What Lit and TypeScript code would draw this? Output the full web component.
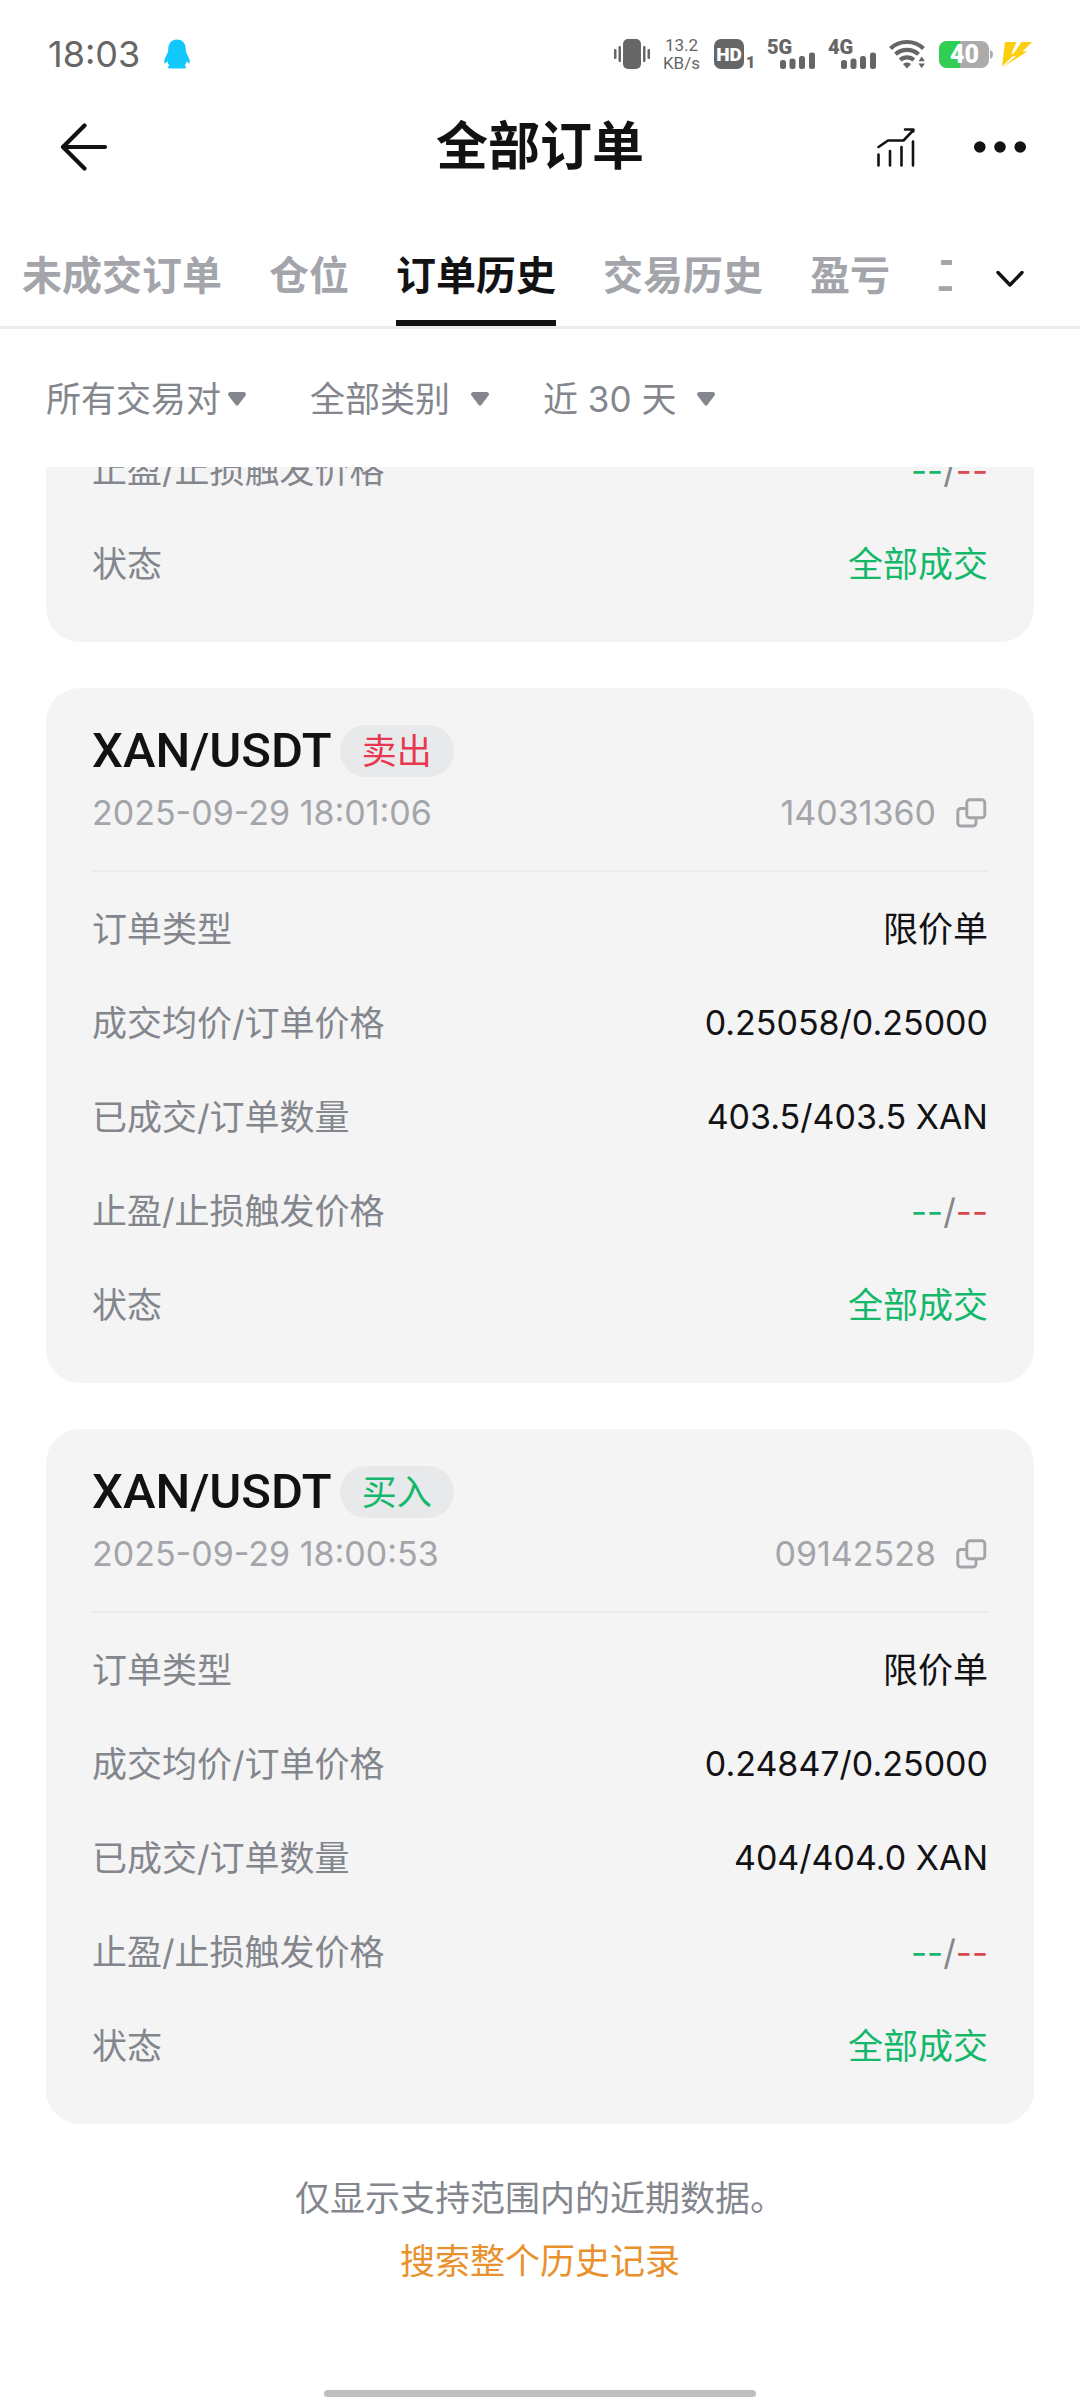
import { LitElement, html, css, nothing } from "lit";
import { customElement, property, state } from "lit/decorators.js";
import { classMap } from "lit/directives/class-map.js";

type Tone = "plain" | "num" | "good" | "stops";

interface Row {
  label: string;
  value: string;
  tone: Tone;
}

interface Order {
  pair: string;
  side: string;
  buy: boolean;
  time: string;
  id: string;
  rows: Row[];
}

const STOPS: Row = { label: "止盈/止损触发价格", value: "", tone: "stops" };
const DONE: Row = { label: "状态", value: "全部成交", tone: "good" };

const ORDERS: Order[] = [
  {
    pair: "XAN/USDT",
    side: "卖出",
    buy: false,
    time: "2025-09-29 18:01:06",
    id: "14031360",
    rows: [
      { label: "订单类型", value: "限价单", tone: "plain" },
      { label: "成交均价/订单价格", value: "0.25058/0.25000", tone: "num" },
      { label: "已成交/订单数量", value: "403.5/403.5 XAN", tone: "num" },
      STOPS,
      DONE,
    ],
  },
  {
    pair: "XAN/USDT",
    side: "买入",
    buy: true,
    time: "2025-09-29 18:00:53",
    id: "09142528",
    rows: [
      { label: "订单类型", value: "限价单", tone: "plain" },
      { label: "成交均价/订单价格", value: "0.24847/0.25000", tone: "num" },
      { label: "已成交/订单数量", value: "404/404.0 XAN", tone: "num" },
      STOPS,
      DONE,
    ],
  },
];

const TABS = ["未成交订单", "仓位", "订单历史", "交易历史", "盈亏", "工具"];

@customElement("status-bar")
class StatusBar extends LitElement {
  static styles = css`
    :host {
      display: flex;
      align-items: center;
      height: 92px;
      padding: 16px 48px 0;
      box-sizing: border-box;
      color: #666;
      font-family: Roboto, "Liberation Sans", sans-serif;
    }
    svg {
      display: block;
      flex: none;
      overflow: visible;
    }
    .time {
      font-family: Inter, sans-serif;
      font-size: 36px;
      line-height: 44px;
    }
    .qq {
      margin-left: 24px;
    }
    .right {
      display: flex;
      align-items: center;
      gap: 13px;
      margin-left: auto;
    }
    .speed {
      font-size: 17px;
      line-height: 18px;
      text-align: center;
    }
    .power {
      display: flex;
      align-items: center;
      gap: 9px;
    }
    .glyph {
      font-family: Roboto, sans-serif;
      font-weight: 900;
    }
  `;

  private signal(name: string) {
    return html`<svg width="48" height="30" viewBox="0 0 48 30" fill="#666" role="img" aria-label=${name}>
      <text class="glyph" x="0" y="15" font-size="20">${name}</text>
      <rect x="13" y="21" width="6" height="9" rx="2.5" />
      <rect x="22.5" y="19.5" width="6" height="10.5" rx="2.5" />
      <rect x="32" y="17" width="6" height="13" rx="2.5" />
      <rect x="42" y="13.5" width="6" height="16.5" rx="2.5" />
    </svg>`;
  }

  render() {
    return html`
      <span class="time">18:03</span>
      <svg class="qq" width="26" height="30" viewBox="0 0 26 30" fill="#12c8fa">
        <path d="M13 .5C7.500 .5 4.300 4.500 4.300 9.500c0 3-.6 4.500-2 7C.8 19.200 0 21.800.2 23.600c.1 1.100.8 1 1.500.4l1.700-1.700c.3 1.700 1 3.200 2 4.400-1 .4-1.600 1-1.600 1.700 0 .8 1 1.100 3.500 1.100h11.400c2.500 0 3.500-.3 3.500-1.100 0-.7-.6-1.300-1.600-1.700 1-1.200 1.700-2.700 2-4.400l1.700 1.700c.7.6 1.400.7 1.500-.4.200-1.800-.6-4.400-2.100-7.100-1.400-2.500-2-4-2-7C21.700 4.500 18.500.5 13 .5z" />
      </svg>
      <div class="right">
        <svg width="36" height="30" viewBox="0 0 36 30" fill="#666">
          <rect x="9" y="0" width="18" height="30" rx="5" />
          <rect x="4.500" y="7" width="2.500" height="16" rx="1" />
          <rect x="0" y="10" width="2.500" height="10" rx="1" />
          <rect x="29" y="7" width="2.500" height="16" rx="1" />
          <rect x="33.500" y="10" width="2.500" height="10" rx="1" />
        </svg>
        <div class="speed">13.2<br />KB/s</div>
        <svg width="41" height="30" viewBox="0 0 41 30" fill="#666">
          <rect x="1" y="0" width="30" height="30" rx="7" />
          <text class="glyph" x="16" y="22" font-size="19" fill="#fff" text-anchor="middle">HD</text>
          <text class="glyph" x="33" y="29" font-size="16">1</text>
        </svg>
        ${this.signal("5G")} ${this.signal("4G")}
        <svg width="37" height="30" viewBox="0 0 37 30" fill="none" stroke="#666">
          <path d="M1.500 9.500C10.500.8 25.500.8 34.500 9.500" stroke-width="4.200" />
          <path d="M6.500 15.300C12.800 9.400 23.200 9.400 29.500 15.300" stroke-width="4.200" />
          <path d="M11.200 21C15 17.400 21 17.400 24.800 21" stroke-width="4.200" />
          <path d="M14 25q4-2.800 8 0l-4 4.500z" fill="#666" stroke="none" />
          <path d="M29.500 22.200l3.200-4.700 3.200 4.700zM29.500 24.600h6.400l-3.200 4.700z" fill="#666" stroke="none" />
        </svg>
        <div class="power">
          <svg width="54" height="27" viewBox="0 0 54 27" role="img" aria-label="40">
            <clipPath id="body"><rect width="50" height="27" rx="8" /></clipPath>
            <g clip-path="url(#body)">
              <rect width="50" height="27" fill="#ababab" />
              <rect width="21" height="27" fill="#32ce54" />
            </g>
            <path d="M51 9q3 1 3 4.500t-3 4.500z" fill="#ababab" />
            <text class="glyph" x="25.500" y="22" font-size="25" fill="#fff" text-anchor="middle">40</text>
          </svg>
          <svg width="30" height="25" viewBox="0 0 30 25" fill="#fbcf0f">
            <path d="M3 0h11.500L9.500 11.500h4L0 24.500z" />
            <path d="M19.500 0H30L20.500 9.500h4.800L1 25l13-10.800H9.800z" />
          </svg>
        </div>
      </div>
    `;
  }
}

@customElement("order-rows")
class OrderRows extends LitElement {
  @property({ attribute: false }) rows: Row[] = [];

  static styles = css`
    :host {
      display: block;
      font-size: 35px;
      line-height: 42px;
    }
    .rows {
      margin: 0;
    }
    .row {
      display: flex;
      align-items: center;
      justify-content: space-between;
      height: 94px;
    }
    .label {
      color: #83868c;
    }
    .value {
      margin: 0;
      color: #121214;
    }
    .num {
      font-size: 34px;
    }
    .good,
    .up {
      color: #14b86b;
    }
    .down {
      color: #d9474f;
    }
    .stops {
      color: #83868c;
    }
  `;

  render() {
    return html`<dl class="rows">
      ${this.rows.map(
        (row) => html`<div class="row">
          <dt class="label">${row.label}</dt>
          <dd class=${classMap({ value: true, [row.tone]: true })}>${row.tone === "stops"
            ? html`<span class="up">--</span>/<span class="down">--</span>`
            : row.value}</dd>
        </div>`
      )}
    </dl>`;
  }
}

@customElement("order-card")
class OrderCard extends LitElement {
  @property({ attribute: false }) order?: Order;
  @property({ attribute: false }) rows: Row[] = [];

  static styles = css`
    :host {
      display: block;
      padding: 0 46px 31px;
      border-radius: 34px;
      background: #f4f4f4;
    }
    .head {
      display: flex;
      flex-direction: column;
      gap: 16px;
      margin-bottom: 10px;
      padding: 37px 0;
      border-bottom: 2px solid #ebebec;
    }
    .line {
      display: flex;
      align-items: center;
    }
    .pair {
      margin: 0;
      color: #121214;
      font-family: Roboto, sans-serif;
      font-size: 49px;
      font-weight: 500;
      line-height: 52px;
    }
    .side {
      margin-left: 8px;
      padding: 0 22px;
      border-radius: 26px;
      background: #e8e9eb;
      font-size: 35px;
      line-height: 52px;
    }
    .buy {
      color: #14b86b;
    }
    .sell {
      color: #e8384f;
    }
    .meta {
      justify-content: space-between;
      color: #a3a5aa;
      font-size: 34px;
      line-height: 40px;
    }
    .id {
      display: flex;
      align-items: center;
      gap: 20px;
    }
    .copy {
      display: flex;
      padding: 0;
      border: 0;
      background: none;
      color: inherit;
    }
  `;

  render() {
    const o = this.order;
    return html`
      ${o
        ? html`<header class="head">
            <div class="line">
              <h2 class="pair">${o.pair}</h2>
              <span class=${classMap({ side: true, buy: o.buy, sell: !o.buy })}>${o.side}</span>
            </div>
            <div class="line meta">
              <time>${o.time}</time>
              <span class="id">
                ${o.id}
                <button class="copy" aria-label="复制">
                  <svg width="32" height="30" viewBox="0 0 32 30" fill="none" stroke="currentColor" stroke-width="2.900">
                    <rect x="10.800" y="1.800" width="18" height="18" rx="3" />
                    <path d="M10.800 10.500H4.800a3 3 0 0 0-3 3V25a3 3 0 0 0 3 3H17a3 3 0 0 0 3-3v-5.200" />
                  </svg>
                </button>
              </span>
            </div>
          </header>`
        : nothing}
      <order-rows .rows=${o ? o.rows : this.rows}></order-rows>
    `;
  }
}

@customElement("app-root")
class AppRoot extends LitElement {
  @state() private active = 2;

  static styles = css`
    :host {
      display: flex;
      flex-direction: column;
      min-height: 100vh;
      background: #fff;
      color: #121214;
      font-family: Inter, "Noto Sans CJK SC", sans-serif;
    }
    button,
    select {
      margin: 0;
      border: 0;
      background: none;
      color: inherit;
      font: inherit;
    }
    svg {
      display: block;
      flex: none;
    }
    .bar {
      display: grid;
      grid-template-columns: 1fr auto 1fr;
      align-items: center;
      height: 110px;
      padding: 0 42px;
    }
    .title {
      margin: 0;
      font-size: 52px;
      font-weight: 700;
      line-height: 64px;
    }
    .icon {
      display: flex;
      padding: 12px;
    }
    .back {
      justify-self: start;
      padding-left: 18px;
    }
    .actions {
      display: flex;
      align-items: center;
      justify-self: end;
      gap: 34px;
    }
    .tabs {
      display: flex;
      align-items: stretch;
      height: 124px;
      border-bottom: 3px solid #ececed;
    }
    .strip {
      display: flex;
      flex: 1;
      gap: 47px;
      min-width: 0;
      margin-right: 32px;
      padding-left: 22px;
      overflow: hidden;
    }
    .tab {
      flex: none;
      padding: 30px 0 0;
      border-bottom: 6px solid transparent;
      color: #a3a5ab;
      font-size: 40px;
      font-weight: 700;
      line-height: 48px;
      white-space: nowrap;
    }
    .on {
      border-color: #121214;
      color: #121214;
    }
    .more {
      display: flex;
      align-items: center;
      padding: 30px 56px 0 12px;
    }
    .filters {
      display: flex;
      align-items: center;
      gap: 54px;
      height: 136px;
      padding: 2px 46px 0;
      color: #83868c;
      font-size: 35px;
      line-height: 44px;
    }
    .filter {
      display: flex;
      align-items: center;
    }
    .pick {
      height: 48px;
      padding: 0 38px 0 0;
      appearance: none;
    }
    .arrow {
      margin-left: -18px;
      pointer-events: none;
    }
    .close {
      margin-right: 10px;
    }
    .close .pick {
      padding-right: 24px;
    }
    .list {
      display: flex;
      flex-direction: column;
      gap: 46px;
      padding: 0 46px;
      overflow: hidden;
    }
    .cut {
      margin-top: -44px;
    }
    .foot {
      display: flex;
      flex-direction: column;
      align-items: center;
      gap: 19px;
      padding-top: 52px;
      color: #83868c;
      font-size: 35px;
      line-height: 44px;
    }
    .note {
      margin: 0;
    }
    .link {
      color: #e8912d;
      text-decoration: none;
    }
    .home {
      width: 40%;
      height: 7px;
      margin: auto auto 3px;
      border-radius: 4px;
      background: #bfbfbf;
    }
  `;

  private filter(name: string, value: string, close = false) {
    return html`<label class=${classMap({ filter: true, close })}>
      <select class="pick" aria-label=${name}>
        <option>${value}</option>
      </select>
      <svg class="arrow" width="18" height="14" viewBox="0 0 18 14" fill="#83868c">
        <path d="M2 0h14q3 1 1.500 3.400L10.500 12.800q-1.500 1.700-3 0L.5 3.400Q-1 1 2 0z" />
      </svg>
    </label>`;
  }

  render() {
    return html`
      <status-bar></status-bar>
      <header class="bar">
        <button class="icon back" aria-label="返回">
          <svg width="48" height="48" viewBox="0 0 48 48" fill="none" stroke="#121214" stroke-width="4.200" stroke-linecap="round" stroke-linejoin="round">
            <path d="M45 24H3M24.500 2.500L3 24l21.500 21.500" />
          </svg>
        </button>
        <h1 class="title">全部订单</h1>
        <div class="actions">
          <button class="icon" aria-label="图表">
            <svg width="40" height="40" viewBox="0 0 40 40" fill="none" stroke="#121214" stroke-width="2.600" stroke-linecap="round" stroke-linejoin="round">
              <path d="M2.500 20L12 13.500h15.500L37.500 3M29 2.500h8.300v2" />
              <path d="M2.500 27.500v11M14 24v14.500M25.500 20v18.500M37 14.500v24" />
            </svg>
          </button>
          <button class="icon" aria-label="更多">
            <svg width="52" height="12" viewBox="0 0 52 12" fill="#121214">
              <circle cx="5.800" cy="6" r="5.800" />
              <circle cx="26" cy="6" r="5.800" />
              <circle cx="46.200" cy="6" r="5.800" />
            </svg>
          </button>
        </div>
      </header>
      <nav class="tabs">
        <div class="strip" role="tablist">
          ${TABS.map(
            (name, i) => html`<button
              class=${classMap({ tab: true, on: i === this.active })}
              role="tab"
              aria-selected=${i === this.active ? "true" : "false"}
              @click=${() => (this.active = i)}
            >${name}</button>`
          )}
        </div>
        <button class="more" aria-label="展开">
          <svg width="28" height="18" viewBox="0 0 28 18" fill="none" stroke="#121214" stroke-width="3.400" stroke-linecap="round" stroke-linejoin="round">
            <path d="M2 2.500l12 12.500 12-12.500" />
          </svg>
        </button>
      </nav>
      <div class="filters">
        ${this.filter("交易对", "所有交易对", true)} ${this.filter("类别", "全部类别")}
        ${this.filter("时间", "近 30 天")}
      </div>
      <main class="list">
        <order-card class="cut" .rows=${[STOPS, DONE]}></order-card>
        ${ORDERS.map((o) => html`<order-card .order=${o}></order-card>`)}
      </main>
      <footer class="foot">
        <p class="note">仅显示支持范围内的近期数据。</p>
        <a class="link" href="#history">搜索整个历史记录</a>
      </footer>
      <div class="home"></div>
    `;
  }
}
